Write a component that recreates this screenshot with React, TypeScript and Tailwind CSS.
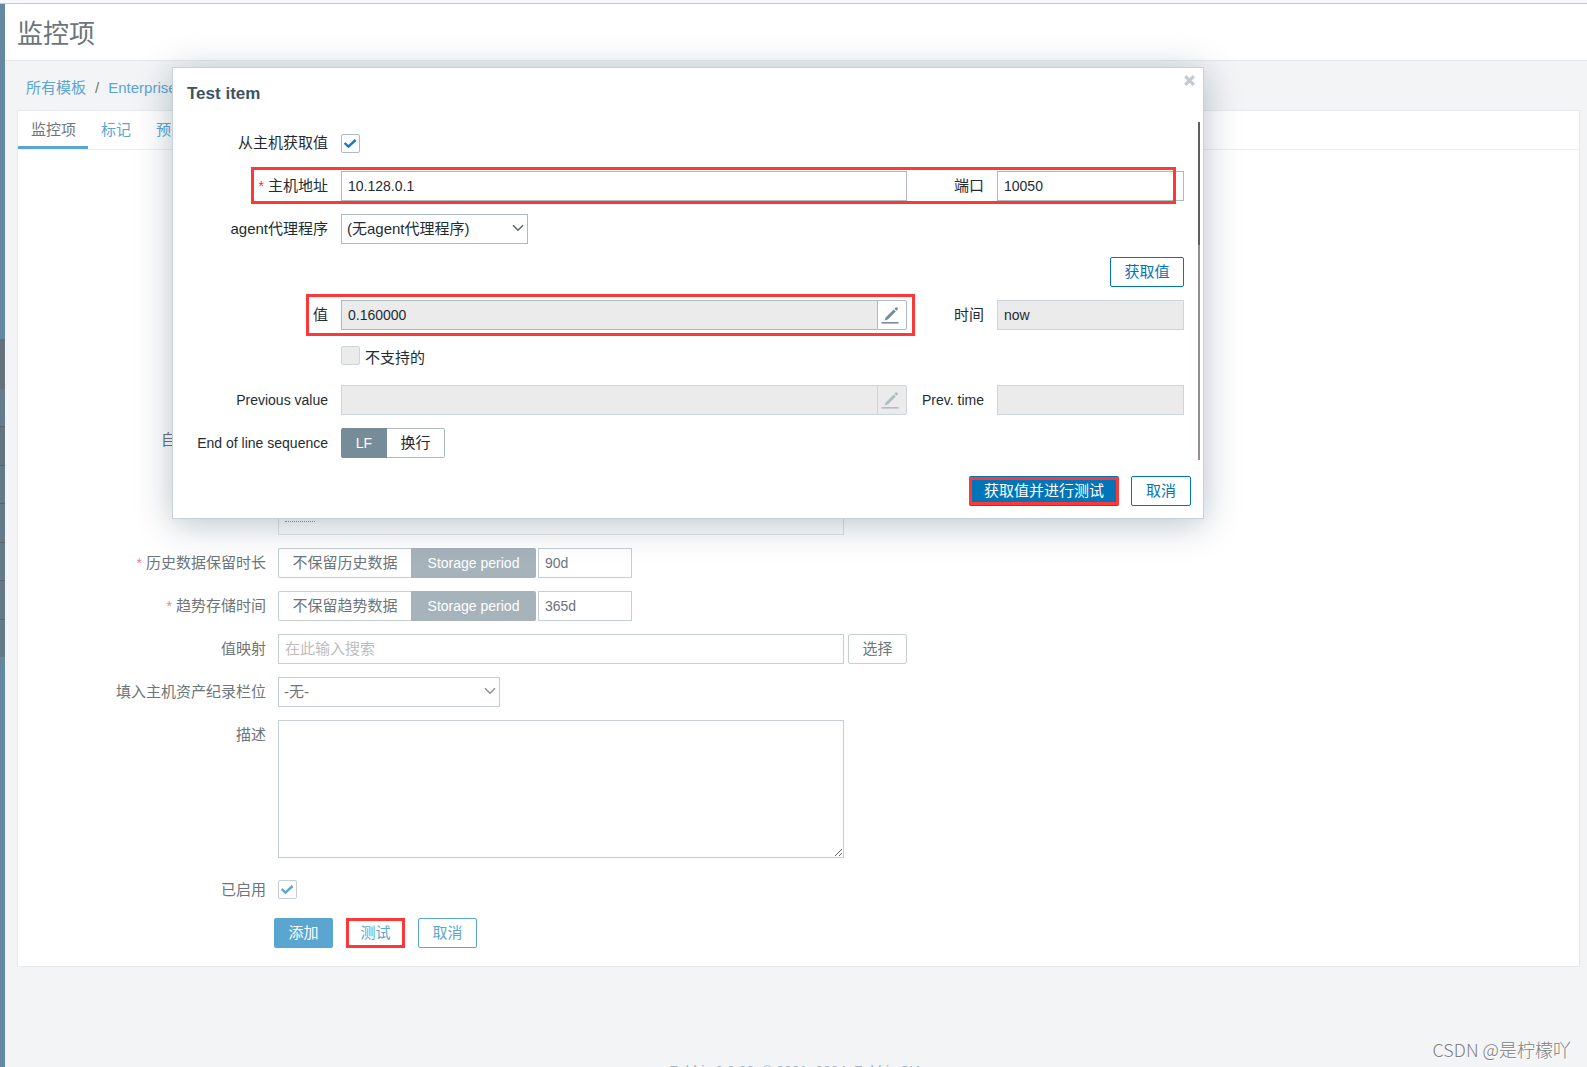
import type { ReactNode } from "react";

const redBox = "pointer-events-none absolute border-[3px] border-[#fd3838]";

function Check({ className }: { className: string }) {
  return (
    <svg
      viewBox="0 0 19 19"
      className={"pointer-events-none absolute inset-0 size-[19px] fill-none " + className}
      strokeWidth="2.4"
    >
      <path d="M3.6 9 L7.4 12.6 L14.6 6" />
    </svg>
  );
}

function Chevron({ className }: { className: string }) {
  return (
    <svg
      viewBox="0 0 12 8"
      className={"pointer-events-none absolute top-[10px] right-1 h-2 w-3 fill-none " + className}
      strokeWidth="1.5"
    >
      <path d="M1 1.2 L6 6.2 L11 1.2" />
    </svg>
  );
}

function Pencil({ className }: { className: string }) {
  return (
    <svg viewBox="0 0 18 18" className={"mr-1 size-[18px] " + className}>
      <path d="M0.5 16h17v1.6h-17z" />
      <path d="M3.6 14.6l1.1-3.2 8-8 2.1 2.1-8 8z" />
      <path d="M13.4 2.7l1.2-1.2q0.8-0.6 1.6 0.1l0.5 0.5q0.6 0.8 0 1.5l-1.2 1.2z" />
    </svg>
  );
}

function Row({
  id,
  label,
  required,
  className = "h-[30px]",
  children,
}: {
  id: string;
  label: string;
  required?: boolean;
  className?: string;
  children: ReactNode;
}) {
  return (
    <div className={"flex gap-3 " + className}>
      <label htmlFor={id} className="w-[248px] shrink-0 text-right leading-[30px]">
        {required && <span className="mr-1 text-[14px] text-[#ec7f7f]">*</span>}
        {label}
      </label>
      {children}
    </div>
  );
}

function ModalRow({
  id,
  label,
  required,
  latin,
  className = "h-[30px]",
  children,
}: {
  id: string;
  label: string;
  required?: boolean;
  latin?: boolean;
  className?: string;
  children: ReactNode;
}) {
  return (
    <div className={"relative flex items-center gap-[13px] " + className}>
      <label
        htmlFor={id}
        className={"w-[155px] shrink-0 text-right " + (latin ? "text-[14px]" : "")}
      >
        {required && <span className="mr-1 text-[14px] text-[#e33734]">*</span>}
        {label}
      </label>
      {children}
    </div>
  );
}

function SideLabel({ id, latin, children }: { id: string; latin?: boolean; children: ReactNode }) {
  return (
    <label htmlFor={id} className={"w-16 shrink-0 text-right " + (latin ? "text-[14px]" : "")}>
      {children}
    </label>
  );
}

function Storage({ id, option, value }: { id: string; option: string; value: string }) {
  return (
    <div className="flex">
      <button className="w-[133px] rounded-l-[2px] border border-r-0 border-[#c5cfd4]">{option}</button>
      <button className="w-[125px] rounded-r-[2px] bg-[#a6b3bb] text-[14px] text-white">
        Storage period
      </button>
      <input
        id={id}
        defaultValue={value}
        className="ml-[2px] w-[94px] border border-[#c5cfd4] px-[6px] text-[14px]"
      />
    </div>
  );
}

function Sidebar() {
  return (
    <aside className="w-[5px] shrink-0 bg-[#6388a0] pt-[335px]">
      <div className="h-[50px] bg-[#64727c]" />
      <div className="h-[38px] border-b border-[#5b6469] bg-[#657c8b]" />
      <div className="h-[39px] border-b border-[#5b6469] bg-[#627480]" />
      <div className="h-[38px] border-b border-[#5b6469] bg-[#657a88]" />
      <div className="h-[39px] border-b border-[#5b6469] bg-[#657a88]" />
      <div className="h-[38px] border-b border-[#5b6469] bg-[#657a88]" />
      <div className="h-[39px] border-b border-[#5b6469] bg-[#657a88]" />
      <div className="h-[37px] bg-[#657a88]" />
    </aside>
  );
}

function ItemForm() {
  return (
    <form
      className="flex flex-col gap-[13px] pt-[275px] pb-[18px]"
      onSubmit={(e) => e.preventDefault()}
    >
      <Row id="interval" label="自定义时间间隔" className="h-[110px]">
        <div className="flex w-[566px] items-end border border-[#dde2e5] px-[6px] pb-3">
          <button
            id="interval"
            className="border-b border-dotted border-[#5ba5d1] leading-5 text-[#5ba5d1]"
          >
            添加
          </button>
        </div>
      </Row>
      <Row id="history" label="历史数据保留时长" required>
        <Storage id="history" option="不保留历史数据" value="90d" />
      </Row>
      <Row id="trends" label="趋势存储时间" required>
        <Storage id="trends" option="不保留趋势数据" value="365d" />
      </Row>
      <Row id="valuemap" label="值映射">
        <div className="flex gap-1">
          <input
            id="valuemap"
            placeholder="在此输入搜索"
            className="w-[566px] border border-[#c5cfd4] px-[6px] placeholder:text-[#bdbdbd]"
          />
          <button className="w-[59px] rounded-[2px] border border-[#c5cfd4]">选择</button>
        </div>
      </Row>
      <Row id="inventory" label="填入主机资产纪录栏位">
        <div className="relative flex">
          <select
            id="inventory"
            className="w-[222px] appearance-none border border-[#c5cfd4] bg-white px-[5px]"
          >
            <option>-无-</option>
          </select>
          <Chevron className="stroke-[#8b9296]" />
        </div>
      </Row>
      <Row id="description" label="描述" className="h-[138px]">
        <textarea id="description" className="w-[566px] resize border border-[#c5cfd4] p-[6px]" />
      </Row>
      <Row id="enabled" label="已启用" className="mt-1 h-[30px]">
        <div className="relative mt-[5px] size-[19px]">
          <input
            id="enabled"
            type="checkbox"
            defaultChecked
            className="block size-[19px] appearance-none rounded-[2px] border border-[#c5cfd4]"
          />
          <Check className="stroke-[#5ba5d1]" />
        </div>
      </Row>
      <div className="flex h-[30px] gap-[13px] pl-64">
        <button className="w-[59px] rounded-[2px] bg-[#5ba5d1] text-white">添加</button>
        <button className="w-[59px] border-[3px] border-[#fd3838] text-[#5ba5d1]">测试</button>
        <button className="w-[59px] rounded-[2px] border border-[#5ba5d1] text-[#5ba5d1]">
          取消
        </button>
      </div>
    </form>
  );
}

function TestDialog() {
  const field = "h-[30px] border px-[6px] text-[14px]";
  return (
    <div
      role="dialog"
      aria-labelledby="dialog-title"
      className="absolute top-[67px] left-[172px] w-[1032px] border border-[#c6d1d7] bg-white text-[#1f2c33] shadow-[0_5px_34px_rgba(0,40,60,0.28)]"
    >
      <div className="flex items-start justify-between pl-[14px]">
        <h2
          id="dialog-title"
          className="mt-[14px] text-[17px] leading-6 font-bold text-[#3c5563]"
        >
          Test item
        </h2>
        <button aria-label="Close" className="mt-[6px] mr-[7px] p-px">
          <svg viewBox="0 0 11 11" className="size-[11px] stroke-[#c0cad0]" strokeWidth="3.2">
            <path d="M1.2 1.2 L9.8 9.8 M9.8 1.2 L1.2 9.8" />
          </svg>
        </button>
      </div>

      <div className="mt-4 mr-[3px] flex h-[338px] justify-between">
        <div className="flex flex-col gap-[13px] pt-[6px]">
          <ModalRow id="gethost" label="从主机获取值">
            <div className="relative size-[19px]">
              <input
                id="gethost"
                type="checkbox"
                defaultChecked
                className="block size-[19px] appearance-none rounded-[2px] border border-[#acbbc2]"
              />
              <Check className="stroke-[#0f7cbd]" />
            </div>
          </ModalRow>
          <ModalRow id="host" label="主机地址" required>
            <input
              id="host"
              defaultValue="10.128.0.1"
              className={field + " w-[566px] border-[#acbbc2]"}
            />
            <SideLabel id="port">端口</SideLabel>
            <input
              id="port"
              defaultValue="10050"
              className={field + " w-[187px] border-[#acbbc2]"}
            />
            <span className={redBox + " -top-1 -bottom-[3px] left-[78px] right-2"} />
          </ModalRow>
          <ModalRow id="proxy" label="agent代理程序">
            <div className="relative flex h-[30px]">
              <select
                id="proxy"
                className="w-[187px] appearance-none border border-[#acbbc2] bg-white px-[5px]"
              >
                <option>(无agent代理程序)</option>
              </select>
              <Chevron className="stroke-[#5b666c]" />
            </div>
          </ModalRow>
          <div className="flex h-[30px] justify-end">
            <button className="w-[74px] rounded-[2px] border border-[#0275b8] text-[#0275b8]">
              获取值
            </button>
          </div>
          <ModalRow id="value" label="值">
            <div className="flex">
              <input
                id="value"
                readOnly
                defaultValue="0.160000"
                className={field + " w-[536px] border-r-0 border-[#acbbc2] bg-[#ebebeb]"}
              />
              <button
                aria-label="Edit value"
                className="flex w-[30px] items-center justify-center rounded-r-[2px] border border-[#acbbc2]"
              >
                <Pencil className="fill-[#768d99]" />
              </button>
            </div>
            <SideLabel id="time">时间</SideLabel>
            <input
              id="time"
              readOnly
              defaultValue="now"
              className={field + " w-[187px] border-[#ccd5d9] bg-[#ebebeb]"}
            />
            <span className={redBox + " -top-[6px] left-[133px] h-[42px] w-[609px]"} />
          </ModalRow>
          <div className="flex h-[29px] gap-[5px] pl-[168px]">
            <input
              id="unsupported"
              type="checkbox"
              disabled
              className="mt-[3px] size-[19px] appearance-none rounded-[2px] border border-[#ccd5d9] bg-[#ebebeb]"
            />
            <label htmlFor="unsupported" className="leading-[29px]">
              不支持的
            </label>
          </div>
          <ModalRow id="prev" label="Previous value" latin>
            <div className="flex">
              <input
                id="prev"
                disabled
                className={field + " w-[536px] border-r-0 border-[#ccd5d9] bg-[#ebebeb]"}
              />
              <button
                aria-label="Edit previous value"
                disabled
                className="flex w-[30px] items-center justify-center rounded-r-[2px] border border-[#ccd5d9] bg-[#ebebeb]"
              >
                <Pencil className="fill-[#b2bdc3]" />
              </button>
            </div>
            <SideLabel id="prevtime" latin>
              Prev. time
            </SideLabel>
            <input
              id="prevtime"
              disabled
              className={field + " w-[187px] border-[#ccd5d9] bg-[#ebebeb]"}
            />
          </ModalRow>
          <ModalRow id="eol" label="End of line sequence" latin>
            <div className="flex h-[30px]">
              <button id="eol" className="w-[46px] rounded-l-[2px] bg-[#768d99] text-[14px] text-white">
                LF
              </button>
              <button className="w-[58px] rounded-r-[2px] border border-l-0 border-[#acbbc2]">
                换行
              </button>
            </div>
          </ModalRow>
        </div>
        <div className="w-[2px] bg-[#958f90]">
          <div className="h-[123px] bg-[#5f5f5f]" />
        </div>
      </div>

      <div className="mt-4 mr-3 mb-3 flex h-[30px] justify-end gap-3">
        <button className="relative w-[150px] rounded-[2px] bg-[#0275b8] text-white">
          获取值并进行测试
          <span className={redBox + " inset-x-0 inset-y-px"} />
        </button>
        <button className="w-[60px] rounded-[2px] border border-[#0275b8] text-[#0275b8]">
          取消
        </button>
      </div>
    </div>
  );
}

export default function App() {
  return (
    <div className="relative flex h-screen flex-col overflow-hidden bg-[#f2f4f6] font-['Liberation_Sans','Noto_Sans_CJK_SC',sans-serif] text-[15px] text-[#6c757a]">
      <div className="h-1 shrink-0 border-b border-[#c8cacf] bg-[#f6f7fa]" />
      <div className="flex min-h-0 grow">
        <Sidebar />
        <div className="min-w-0 grow">
          <header className="h-[57px] border-b border-[#e6e9eb] bg-white pt-[2px] pl-3">
            <h1 className="text-[26px] leading-[57px]">监控项</h1>
          </header>
          <nav className="flex h-[49px] items-center pt-[5px] pl-[21px]">
            <a href="#templates" className="text-[#5ba5d1]">
              所有模板
            </a>
            <span className="px-[9px]">/</span>
            <a href="#template" className="text-[#5ba5d1]">
              Enterprise
            </a>
          </nav>
          <main className="mr-[7px] ml-3 border border-[#e6e9eb] bg-white">
            <div className="flex h-[39px] border-b border-[#eceef0]">
              <a href="#item" className="border-b-[3px] border-[#5ba5d1] pr-3 pl-[13px] leading-[37px]">
                监控项
              </a>
              <a href="#tags" className="pr-3 pl-[13px] leading-[37px] text-[#5ba5d1]">
                标记
              </a>
              <a href="#preprocessing" className="pl-[13px] leading-[37px] text-[#5ba5d1]">
                预处理
              </a>
            </div>
            <ItemForm />
          </main>
          <footer className="mt-[94px] text-center text-[14px] leading-5 text-[#9fb2bf]">
            Zabbix 6.0.30. © 2001–2024, Zabbix SIA
          </footer>
        </div>
      </div>
      <TestDialog />
      <div className="absolute right-4 bottom-[5px] font-['Noto_Sans_CJK_SC',sans-serif] text-[18px] leading-[26px] font-light text-[#808080] [text-shadow:1px_1px_1px_white]">
        CSDN @是柠檬吖
      </div>
    </div>
  );
}
